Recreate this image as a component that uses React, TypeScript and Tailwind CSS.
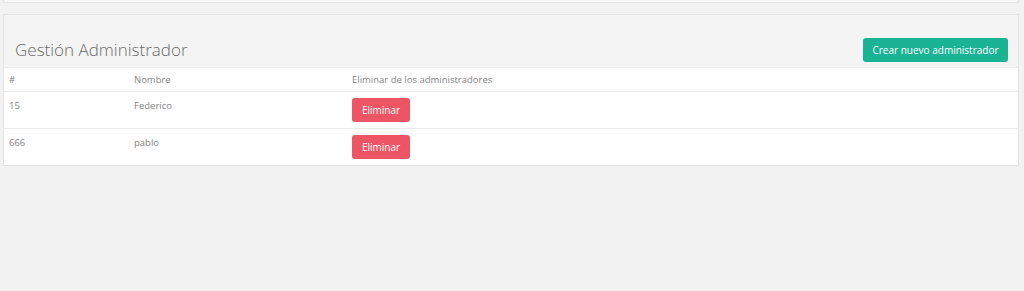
const admins = [
  { id: 15, name: 'Federico' },
  { id: 666, name: 'pablo' },
];

export default function App() {
  return (
    <div className="h-[291px] w-full bg-[#f2f2f2] font-['Open_Sans',sans-serif] text-[#858585]">
      <div className="ml-[3px] mr-[5px] h-[3px] border-x border-b border-[#e4e4e4] bg-[#f7f7f7]" />

      <div className="ml-[3px] mr-[5px] mt-[11px] border border-[#e4e4e4] bg-[#f4f4f4]">
        <div className="flex h-[52px] items-end justify-between pb-[5px] pl-[11px] pr-[10px]">
          <h2 className="mb-[4px] text-[17px] font-light leading-none text-[#6b6b6b]">Gestión Administrador</h2>
          <button className="h-[24px] w-[145px] rounded-[3px] bg-[#1ab394] text-[10px] text-white">
            Crear nuevo administrador
          </button>
        </div>

        <div className="bg-white text-[9.5px]">
          <div className="grid h-[25px] grid-cols-[125px_218px_1fr] items-center border-y border-[#ebebeb] pl-[5px] pt-[1px]">
            <span>#</span>
            <span>Nombre</span>
            <span>Eliminar de los administradores</span>
          </div>
          {admins.map((a, i) => (
            <div
              key={a.id}
              className={
                'grid grid-cols-[125px_218px_1fr] pl-[5px] pt-[6px] ' +
                (i === 0 ? 'h-[37px] border-b border-[#ebebeb]' : 'h-[36px]')
              }
            >
              <span className="pt-[1px] leading-[14px]">{a.id}</span>
              <span className="pt-[1px] leading-[14px]">{a.name}</span>
              <div>
                <button className="h-[24px] w-[58px] rounded-[3px] bg-[#ed5565] text-[10px] text-white">
                  Eliminar
                </button>
              </div>
            </div>
          ))}
        </div>
      </div>
    </div>
  );
}
